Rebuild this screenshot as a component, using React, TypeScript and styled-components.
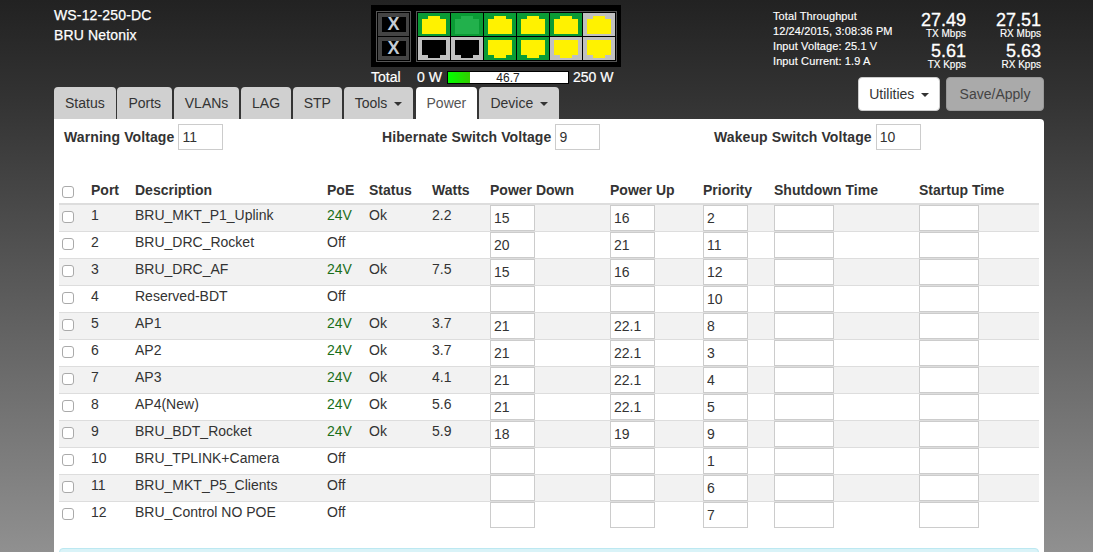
import * as React from 'react';
import styled, { createGlobalStyle } from 'styled-components';

const GlobalStyle = createGlobalStyle`
    html, body {
        margin: 0;
        height: 100%;
        overflow: hidden;
    }
    body {
        font-family: "Liberation Sans", Arial, sans-serif;
        font-size: 14px;
        color: #333;
        background: linear-gradient(180deg, #222222 0, #333333 100px, #909090 552px);
    }
`;

const Page = styled.div`
    width: 1093px;
    height: 552px;
    overflow: hidden;
`;

const Header = styled.header`
    display: flex;
    justify-content: space-between;
    height: 119px;
    padding: 0 49px 0 54px;
`;

const HeaderLeft = styled.div`
    display: flex;
    flex-direction: column;
`;

const TopRow = styled.div`
    display: flex;
    height: 87px;
`;

const DeviceName = styled.div`
    width: 317px;
    padding-top: 5px;
    color: #fff;
    font-size: 14px;
    line-height: 20px;
    letter-spacing: 0.15px;
    -webkit-text-stroke: 0.25px #fff;
`;

const SwitchColumn = styled.div`
    padding-top: 5px;
`;

const SwitchBox = styled.div`
    display: flex;
    gap: 5px;
    width: 250px;
    height: 62px;
    box-sizing: border-box;
    padding: 6px 4px 5px 5px;
    background: #000;
`;

const UplinkStack = styled.div`
    display: flex;
    flex-direction: column;
    gap: 1px;
    width: 35px;
    box-sizing: border-box;
    padding: 1px;
    border: 1px solid #555;
`;

const UplinkCell = styled.div`
    flex: 1;
    display: flex;
    align-items: center;
    justify-content: center;
    background: #444;
`;

const UplinkMark = styled.span`
    width: 24px;
    height: 15px;
    background: #000;
    color: #c4ccd4;
    font-size: 18px;
    font-weight: bold;
    line-height: 15px;
    text-align: center;
`;

const PortGrid = styled.div`
    display: grid;
    grid-template-columns: repeat(6, 32px);
    grid-template-rows: repeat(2, 23px);
    gap: 1px;
    padding: 1px;
    border: 1px solid #555;
`;

const PortCell = styled.div<{ $link: boolean }>`
    display: flex;
    align-items: center;
    justify-content: center;
    background: ${p => (p.$link ? '#0a9b35' : '#c0c0c0')};
`;

const PortIcon = styled.svg<{ $flip: boolean }>`
    display: block;
    width: 24px;
    height: 18px;
    transform: ${p => (p.$flip ? 'scaleY(-1)' : 'none')};
`;

const TotalRow = styled.div`
    display: flex;
    align-items: center;
    height: 14px;
    margin-top: 3px;
    color: #fff;
    font-size: 14px;
    -webkit-text-stroke: 0.2px #fff;
`;

const TotalLabel = styled.span`
    width: 46px;
`;

const MinLabel = styled.span`
    width: 30px;
`;

const PowerBar = styled.div`
    position: relative;
    width: 122px;
    height: 13px;
    box-sizing: border-box;
    border: 1px solid #000;
    background: #fff;
    color: #222;
    font-size: 12px;
    line-height: 12px;
    text-align: center;
    -webkit-text-stroke: 0;
`;

const PowerFill = styled.div`
    position: absolute;
    left: 0;
    top: 0;
    bottom: 0;
    background: linear-gradient(90deg, #00ff00, #33cc00);
`;

const PowerValue = styled.span`
    position: relative;
`;

const MaxLabel = styled.span`
    margin-left: 4px;
`;

const Tabs = styled.nav`
    display: flex;
    gap: 1.7px;
    height: 32px;
`;

const Tab = styled.div<{ $active?: boolean }>`
    margin: ${p => (p.$active ? '0 0.5px 0 1px' : '0')};
    padding: 0 11px;
    border-radius: 4px 4px 0 0;
    background: ${p => (p.$active ? '#fff' : '#d0d0d0')};
    color: ${p => (p.$active ? '#555' : '#333')};
    font-size: 14px;
    line-height: 32px;
`;

const Caret = styled.span`
    display: inline-block;
    margin-left: 6.5px;
    vertical-align: middle;
    border-top: 4px solid currentColor;
    border-left: 4px solid transparent;
    border-right: 4px solid transparent;
`;

const HeaderRight = styled.div`
    display: flex;
    flex-direction: column;
    justify-content: space-between;
    width: 271px;
    padding: 9px 0 8px;
`;

const StatsRow = styled.div`
    display: flex;
    color: #fff;
`;

const InfoLines = styled.div`
    width: 130px;
    font-size: 11px;
    line-height: 15px;
    letter-spacing: 0.1px;
    -webkit-text-stroke: 0.15px #fff;
`;

const Counters = styled.div`
    display: grid;
    grid-template-columns: 63px 75px;
    grid-auto-rows: 31px;
    margin-top: 2px;
    text-align: right;
`;

const CounterValue = styled.div`
    font-size: 18px;
    line-height: 18px;
    -webkit-text-stroke: 0.3px #fff;
`;

const CounterLabel = styled.div`
    font-size: 10px;
    line-height: 10px;
    -webkit-text-stroke: 0.15px #fff;
`;

const Actions = styled.div`
    display: flex;
    justify-content: flex-end;
    gap: 6px;
`;

const ActionButton = styled.button<{ $disabled?: boolean; $width: number }>`
    width: ${p => p.$width}px;
    height: 34px;
    padding: 0;
    box-sizing: border-box;
    border: 1px solid ${p => (p.$disabled ? '#999' : '#ccc')};
    border-radius: 4px;
    background: ${p => (p.$disabled ? '#aaa' : '#fff')};
    color: ${p => (p.$disabled ? '#444' : '#333')};
    font-family: inherit;
    font-size: 14px;
`;

const Panel = styled.main`
    width: 990px;
    height: 433px;
    overflow: hidden;
    box-sizing: border-box;
    padding: 5px 5px 0;
    margin-left: 54px;
    border-radius: 0 4px 0 0;
    background: #fff;
`;

const VoltageRow = styled.div`
    display: grid;
    grid-template-columns: 318px 332px auto;
    height: 26px;
    padding-left: 5px;
`;

const VoltageField = styled.label`
    display: flex;
    align-items: center;
    gap: 4px;
    font-weight: bold;
    letter-spacing: 0.1px;
`;

const TextBox = styled.input<{ $width: number }>`
    display: block;
    width: ${p => p.$width}px;
    height: 26px;
    box-sizing: border-box;
    padding: 0 3px;
    border: 1px solid #ccc;
    background: #fff;
    color: #333;
    font-family: inherit;
    font-size: 14px;
    font-weight: normal;
    letter-spacing: 0;
    outline: none;
`;

const PortsTable = styled.table`
    width: 980px;
    margin-top: 30px;
    table-layout: fixed;
    border-collapse: separate;
    border-spacing: 0;
`;

const HeadCell = styled.th`
    height: 25px;
    padding: 0 5px;
    box-sizing: border-box;
    border-bottom: 2px solid #ddd;
    font-weight: bold;
    line-height: 20px;
    text-align: left;
    vertical-align: top;
`;

const Row = styled.tr`
    &:nth-child(odd) td {
        background: #f2f2f2;
    }
    &:last-child td {
        border-bottom-color: transparent;
    }
`;

const Cell = styled.td`
    height: 27px;
    padding: 0 5px;
    box-sizing: border-box;
    border-bottom: 1px solid #ddd;
    line-height: 20px;
    vertical-align: top;
    white-space: nowrap;
`;

const PoeText = styled.span<{ $on: boolean }>`
    color: ${p => (p.$on ? '#1a6e1a' : '#333')};
`;

const Tick = styled.input`
    display: block;
    width: 12px;
    height: 12px;
    margin: 6px 0 0 -2px;
    appearance: none;
    border: 1px solid #aaa;
    border-radius: 3px;
    background: #fff;
`;

const Notice = styled.div`
    height: 60px;
    margin-top: 19px;
    border: 1px solid #bce8f1;
    border-radius: 4px;
    background: #d9f3f8;
`;

interface IPortRow {
    port: number;
    name: string;
    poe: string;
    status: string;
    watts: string;
    down: string;
    up: string;
    priority: string;
}

const rows: IPortRow[] = [
    { port: 1, name: 'BRU_MKT_P1_Uplink', poe: '24V', status: 'Ok', watts: '2.2', down: '15', up: '16', priority: '2' },
    { port: 2, name: 'BRU_DRC_Rocket', poe: 'Off', status: '', watts: '', down: '20', up: '21', priority: '11' },
    { port: 3, name: 'BRU_DRC_AF', poe: '24V', status: 'Ok', watts: '7.5', down: '15', up: '16', priority: '12' },
    { port: 4, name: 'Reserved-BDT', poe: 'Off', status: '', watts: '', down: '', up: '', priority: '10' },
    { port: 5, name: 'AP1', poe: '24V', status: 'Ok', watts: '3.7', down: '21', up: '22.1', priority: '8' },
    { port: 6, name: 'AP2', poe: '24V', status: 'Ok', watts: '3.7', down: '21', up: '22.1', priority: '3' },
    { port: 7, name: 'AP3', poe: '24V', status: 'Ok', watts: '4.1', down: '21', up: '22.1', priority: '4' },
    { port: 8, name: 'AP4(New)', poe: '24V', status: 'Ok', watts: '5.6', down: '21', up: '22.1', priority: '5' },
    { port: 9, name: 'BRU_BDT_Rocket', poe: '24V', status: 'Ok', watts: '5.9', down: '18', up: '19', priority: '9' },
    { port: 10, name: 'BRU_TPLINK+Camera', poe: 'Off', status: '', watts: '', down: '', up: '', priority: '1' },
    { port: 11, name: 'BRU_MKT_P5_Clients', poe: 'Off', status: '', watts: '', down: '', up: '', priority: '6' },
    { port: 12, name: 'BRU_Control NO POE', poe: 'Off', status: '', watts: '', down: '', up: '', priority: '7' },
];

const columnWidths = [27, 44, 192, 42, 63, 58, 120, 93, 71, 145, 125];

const switchPorts = [
    { link: true, fill: '#fff200' },
    { link: true, fill: '#22b14c' },
    { link: true, fill: '#fff200' },
    { link: true, fill: '#fff200' },
    { link: true, fill: '#fff200' },
    { link: false, fill: '#fff200' },
    { link: false, fill: '#000' },
    { link: false, fill: '#000' },
    { link: true, fill: '#fff200' },
    { link: true, fill: '#fff200' },
    { link: false, fill: '#fff200' },
    { link: false, fill: '#fff200' },
];

const tabs = ['Status', 'Ports', 'VLANs', 'LAG', 'STP', 'Tools', 'Power', 'Device'];
const tabsWithMenu = ['Tools', 'Device'];

const counters = [
    { value: '27.49', label: 'TX Mbps' },
    { value: '27.51', label: 'RX Mbps' },
    { value: '5.61', label: 'TX Kpps' },
    { value: '5.63', label: 'RX Kpps' },
];

export default function App() {
    return (
        <Page>
            <GlobalStyle />
            <Header>
                <HeaderLeft>
                    <TopRow>
                        <DeviceName>
                            <div>WS-12-250-DC</div>
                            <div>BRU Netonix</div>
                        </DeviceName>
                        <SwitchColumn>
                            <SwitchBox>
                                <UplinkStack>
                                    <UplinkCell><UplinkMark>X</UplinkMark></UplinkCell>
                                    <UplinkCell><UplinkMark>X</UplinkMark></UplinkCell>
                                </UplinkStack>
                                <PortGrid>
                                    {switchPorts.map((port, key) => (
                                        <PortCell $link={port.link} key={key}>
                                            <PortIcon $flip={key >= 6} viewBox="0 0 24 18">
                                                <path d="M0 3H6V0H18V3H24V18H0Z" fill={port.fill} />
                                            </PortIcon>
                                        </PortCell>
                                    ))}
                                </PortGrid>
                            </SwitchBox>
                            <TotalRow>
                                <TotalLabel>Total</TotalLabel>
                                <MinLabel>0 W</MinLabel>
                                <PowerBar>
                                    <PowerFill style={{ width: `${(46.7 / 250) * 100}%` }} />
                                    <PowerValue>46.7</PowerValue>
                                </PowerBar>
                                <MaxLabel>250 W</MaxLabel>
                            </TotalRow>
                        </SwitchColumn>
                    </TopRow>
                    <Tabs>
                        {tabs.map(tab => (
                            <Tab $active={tab === 'Power'} key={tab}>
                                {tab}
                                {tabsWithMenu.includes(tab) && <Caret />}
                            </Tab>
                        ))}
                    </Tabs>
                </HeaderLeft>
                <HeaderRight>
                    <StatsRow>
                        <InfoLines>
                            <div>Total Throughput</div>
                            <div>12/24/2015, 3:08:36 PM</div>
                            <div>Input Voltage: 25.1 V</div>
                            <div>Input Current: 1.9 A</div>
                        </InfoLines>
                        <Counters>
                            {counters.map(counter => (
                                <div key={counter.label}>
                                    <CounterValue>{counter.value}</CounterValue>
                                    <CounterLabel>{counter.label}</CounterLabel>
                                </div>
                            ))}
                        </Counters>
                    </StatsRow>
                    <Actions>
                        <ActionButton $width={82}>Utilities<Caret /></ActionButton>
                        <ActionButton $width={98} $disabled>Save/Apply</ActionButton>
                    </Actions>
                </HeaderRight>
            </Header>
            <Panel>
                <VoltageRow>
                    <VoltageField>Warning Voltage <TextBox $width={45} defaultValue="11" /></VoltageField>
                    <VoltageField>Hibernate Switch Voltage <TextBox $width={45} defaultValue="9" /></VoltageField>
                    <VoltageField>Wakeup Switch Voltage <TextBox $width={45} defaultValue="10" /></VoltageField>
                </VoltageRow>
                <PortsTable>
                    <colgroup>
                        {columnWidths.map((width, key) => <col style={{ width }} key={key} />)}
                    </colgroup>
                    <thead>
                        <tr>
                            <HeadCell><Tick type="checkbox" /></HeadCell>
                            <HeadCell>Port</HeadCell>
                            <HeadCell>Description</HeadCell>
                            <HeadCell>PoE</HeadCell>
                            <HeadCell>Status</HeadCell>
                            <HeadCell>Watts</HeadCell>
                            <HeadCell>Power Down</HeadCell>
                            <HeadCell>Power Up</HeadCell>
                            <HeadCell>Priority</HeadCell>
                            <HeadCell>Shutdown Time</HeadCell>
                            <HeadCell>Startup Time</HeadCell>
                        </tr>
                    </thead>
                    <tbody>
                        {rows.map(row => (
                            <Row key={row.port}>
                                <Cell><Tick type="checkbox" /></Cell>
                                <Cell>{row.port}</Cell>
                                <Cell>{row.name}</Cell>
                                <Cell><PoeText $on={row.poe !== 'Off'}>{row.poe}</PoeText></Cell>
                                <Cell>{row.status}</Cell>
                                <Cell>{row.watts}</Cell>
                                <Cell><TextBox $width={45} defaultValue={row.down} /></Cell>
                                <Cell><TextBox $width={45} defaultValue={row.up} /></Cell>
                                <Cell><TextBox $width={45} defaultValue={row.priority} /></Cell>
                                <Cell><TextBox $width={60} /></Cell>
                                <Cell><TextBox $width={60} /></Cell>
                            </Row>
                        ))}
                    </tbody>
                </PortsTable>
                <Notice />
            </Panel>
        </Page>
    );
}
